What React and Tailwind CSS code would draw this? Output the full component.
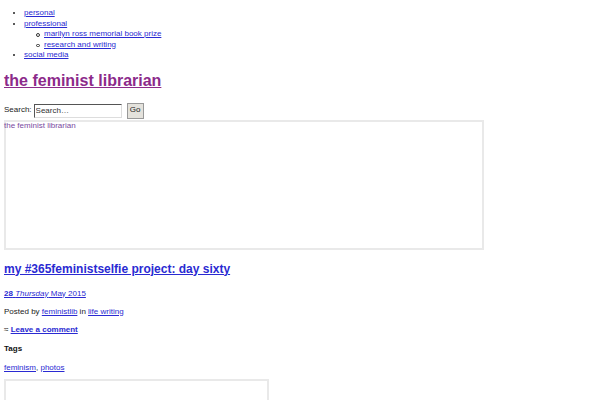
import React from "react";

const link = "text-[#2a2ad2] underline";

function Sub({ children }) {
  return (
    <li className="relative">
      <span className="absolute -left-[8px] top-[4px] h-[3.5px] w-[3.5px] rounded-full border border-[#333]" />
      <a className={link}>{children}</a>
    </li>
  );
}

export default function App() {
  return (
    <div className="min-h-[400px] w-[600px] overflow-hidden bg-white font-['Liberation_Sans',Arial,sans-serif] text-[8px] leading-[10.5px] text-[#222]">
      <ul className="list-disc pl-[24px] pt-[8px]">
        <li><a className={link}>personal</a></li>
        <li>
          <a className={link}>professional</a>
          <ul className="list-none pl-[20px]">
            <Sub>marilyn ross memorial book prize</Sub>
            <Sub>research and writing</Sub>
          </ul>
        </li>
        <li><a className={link}>social media</a></li>
      </ul>

      <h1 className="mt-[11px] px-[4px] text-[16px] font-bold leading-[18px]">
        <a className="text-[#8c2a8a] underline">the feminist librarian</a>
      </h1>

      <div className="mt-[13px] flex h-[16px] items-center px-[4px]">
        <span>Search:</span>
        <input
          className="ml-[2px] h-[14px] w-[88px] border border-t-[#555] border-l-[#555] border-b-[#ddd] border-r-[#ddd] px-[1px] text-[8px] text-[#333] outline-none"
          defaultValue="Search…"
        />
        <button className="ml-[5px] h-[16px] w-[17px] border border-[#999] bg-[#e4e2dc] text-[8px] text-[#222]">Go</button>
      </div>

      <div className="ml-[4px] mt-[1px] h-[130px] w-[480px] border-2 border-[#e9e9e9] text-[#7a4aa0]">
        <div className="-ml-[2px] -mt-[1px]">the feminist librarian</div>
      </div>

      <h2 className="mt-[12px] px-[4px] text-[12px] font-bold leading-[14px]">
        <a className={link}>my #365feministselfie project: day sixty</a>
      </h2>

      <div className="mt-[13px] px-[4px]">
        <a className={link}><b>28</b> <i>Thursday</i> May 2015</a>
      </div>

      <div className="mt-[7.5px] px-[4px]">
        Posted by <a className={link}>feministlib</a> in <a className={link}>life writing</a>
      </div>

      <div className="mt-[7.5px] px-[4px]">
        ≈ <a className={`${link} font-bold`}>Leave a comment</a>
      </div>

      <div className="mt-[8.5px] px-[4px] font-bold text-[#111]">Tags</div>

      <div className="mt-[8.5px] px-[4px]">
        <a className={link}>feminism</a>, <a className={link}>photos</a>
      </div>

      <div className="ml-[4px] mt-[6px] h-[60px] w-[265px] border-2 border-[#e9e9e9]" />
    </div>
  );
}
